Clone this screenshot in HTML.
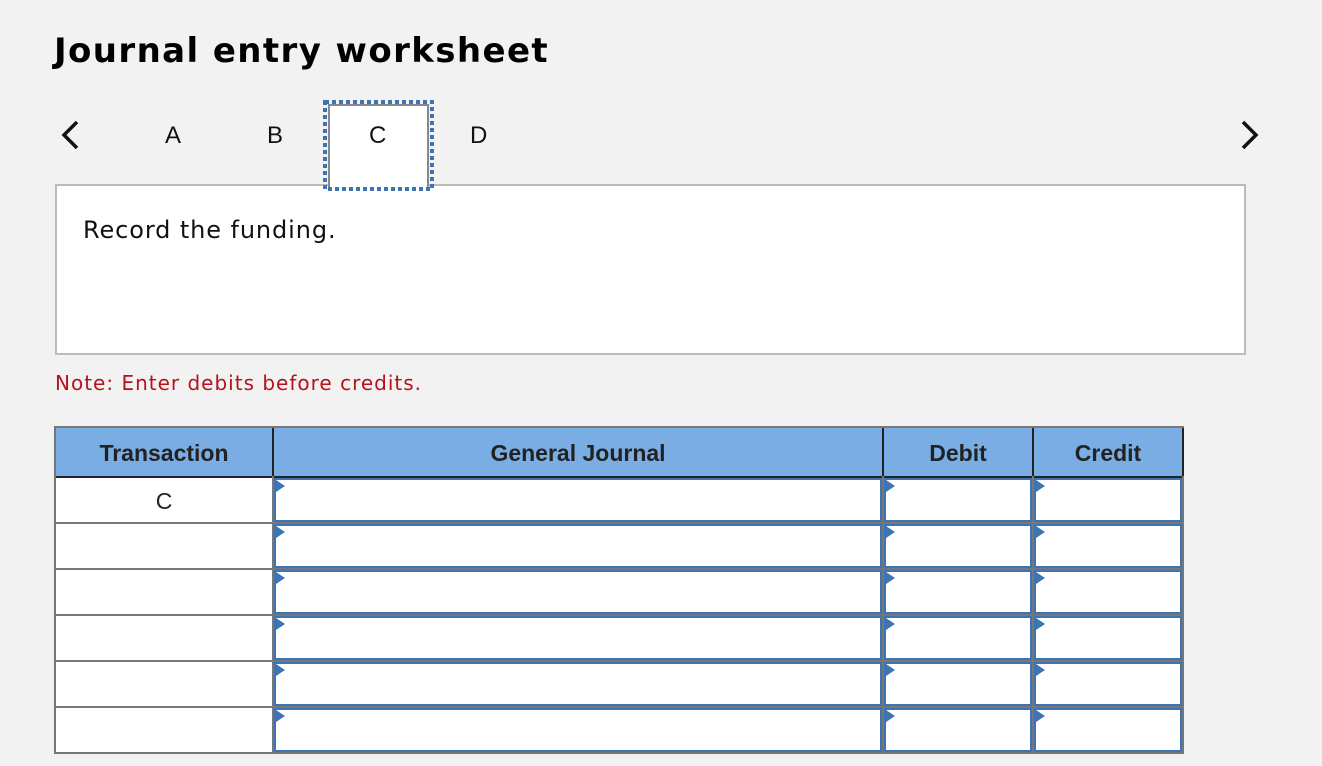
<!DOCTYPE html>
<html><head><style>
body{margin:0;width:1322px;height:766px;background:#f2f2f2;font-family:"Liberation Sans",Arial,sans-serif;position:relative;overflow:hidden}
.a{position:absolute}
h1{position:absolute;left:54px;top:31px;margin:0;font-family:"DejaVu Sans",Verdana,sans-serif;font-size:34px;letter-spacing:1.4px;font-weight:bold;color:#000}
.tab{position:absolute;top:122px;font-size:24px;color:#111}
.vl{position:absolute;background:#777;width:2px}
.hl{position:absolute;background:#777;height:2px}
.inp{position:absolute;background:#fff;border:2px solid #3d74b5;box-sizing:border-box}
.tri{position:absolute;left:0;top:0;width:0;height:0;border-top:6px solid transparent;border-bottom:6px solid transparent;border-left:9px solid #3d74b5}
.th{position:absolute;top:428px;height:48px;line-height:50px;text-align:center;font-weight:bold;font-size:23px;color:#222}
</style></head><body>
<h1>Journal entry worksheet</h1>
<svg class="a" style="left:58px;top:118px" width="26" height="34"><path d="M19 4 L6 17 L19 30" stroke="#111" stroke-width="3.5" fill="none"/></svg>
<svg class="a" style="left:1236px;top:118px" width="26" height="34"><path d="M7 4 L20 17 L7 30" stroke="#111" stroke-width="3.5" fill="none"/></svg>
<div class="tab" style="left:165px">A</div>
<div class="tab" style="left:267px">B</div>
<div class="tab" style="left:470px">D</div>
<div class="a" style="left:55px;top:184px;width:1191px;height:171px;background:#fff;border:2px solid #bbb;box-sizing:border-box"></div>
<div class="a" style="left:328px;top:104px;width:101px;height:84px;border:2px solid #888;border-bottom:none;box-sizing:border-box;background:#fff"></div>
<svg class="a" style="left:323px;top:100px" width="111" height="91"><rect x="2" y="2" width="107" height="87" fill="none" stroke="#3d74b5" stroke-width="4" stroke-dasharray="4 3"/></svg>
<div class="tab" style="left:369px">C</div>
<div class="a" style="left:83px;top:216px;font-family:'DejaVu Sans',Verdana,sans-serif;font-size:24px;letter-spacing:0.9px;color:#111">Record the funding.</div>
<div class="a" style="left:55px;top:371px;font-family:'DejaVu Sans',Verdana,sans-serif;font-size:20px;letter-spacing:1px;color:#b5121b">Note: Enter debits before credits.</div>
<div class="a" style="left:55px;top:427px;width:1128px;height:50px;background:#7aade3"></div>
<div class="a" style="left:55px;top:477px;width:1128px;height:277px;background:#fff"></div>
<div class="th" style="left:55px;width:218px">Transaction</div>
<div class="th" style="left:273px;width:610px">General Journal</div>
<div class="th" style="left:883px;width:150px">Debit</div>
<div class="th" style="left:1033px;width:150px">Credit</div>
<div class="a" style="left:55px;top:478px;width:218px;height:46px;line-height:46px;text-align:center;font-size:23px;color:#222">C</div>
<div class="hl" style="left:54px;top:426px;width:1130px"></div>
<div class="a" style="left:54px;top:476px;width:1130px;height:2px;background:#222"></div>
<div class="hl" style="left:54px;top:522px;width:1130px"></div>
<div class="hl" style="left:54px;top:568px;width:1130px"></div>
<div class="hl" style="left:54px;top:614px;width:1130px"></div>
<div class="hl" style="left:54px;top:660px;width:1130px"></div>
<div class="hl" style="left:54px;top:706px;width:1130px"></div>
<div class="hl" style="left:54px;top:752px;width:1130px"></div>
<div class="vl" style="left:54px;top:426px;height:328px"></div>
<div class="vl" style="left:272px;top:476px;height:278px"></div>
<div class="vl" style="left:882px;top:476px;height:278px"></div>
<div class="vl" style="left:1032px;top:476px;height:278px"></div>
<div class="vl" style="left:1182px;top:426px;height:328px"></div>
<div class="a" style="left:272px;top:428px;width:2px;height:48px;background:#222"></div>
<div class="a" style="left:882px;top:428px;width:2px;height:48px;background:#222"></div>
<div class="a" style="left:1032px;top:428px;width:2px;height:48px;background:#222"></div>
<div class="a" style="left:1182px;top:428px;width:2px;height:48px;background:#222"></div>

<div class="inp" style="left:274px;top:478px;width:608px;height:44px"><div class="tri"></div></div>
<div class="inp" style="left:884px;top:478px;width:148px;height:44px"><div class="tri"></div></div>
<div class="inp" style="left:1034px;top:478px;width:148px;height:44px"><div class="tri"></div></div>
<div class="inp" style="left:274px;top:524px;width:608px;height:44px"><div class="tri"></div></div>
<div class="inp" style="left:884px;top:524px;width:148px;height:44px"><div class="tri"></div></div>
<div class="inp" style="left:1034px;top:524px;width:148px;height:44px"><div class="tri"></div></div>
<div class="inp" style="left:274px;top:570px;width:608px;height:44px"><div class="tri"></div></div>
<div class="inp" style="left:884px;top:570px;width:148px;height:44px"><div class="tri"></div></div>
<div class="inp" style="left:1034px;top:570px;width:148px;height:44px"><div class="tri"></div></div>
<div class="inp" style="left:274px;top:616px;width:608px;height:44px"><div class="tri"></div></div>
<div class="inp" style="left:884px;top:616px;width:148px;height:44px"><div class="tri"></div></div>
<div class="inp" style="left:1034px;top:616px;width:148px;height:44px"><div class="tri"></div></div>
<div class="inp" style="left:274px;top:662px;width:608px;height:44px"><div class="tri"></div></div>
<div class="inp" style="left:884px;top:662px;width:148px;height:44px"><div class="tri"></div></div>
<div class="inp" style="left:1034px;top:662px;width:148px;height:44px"><div class="tri"></div></div>
<div class="inp" style="left:274px;top:708px;width:608px;height:44px"><div class="tri"></div></div>
<div class="inp" style="left:884px;top:708px;width:148px;height:44px"><div class="tri"></div></div>
<div class="inp" style="left:1034px;top:708px;width:148px;height:44px"><div class="tri"></div></div>
</body></html>
